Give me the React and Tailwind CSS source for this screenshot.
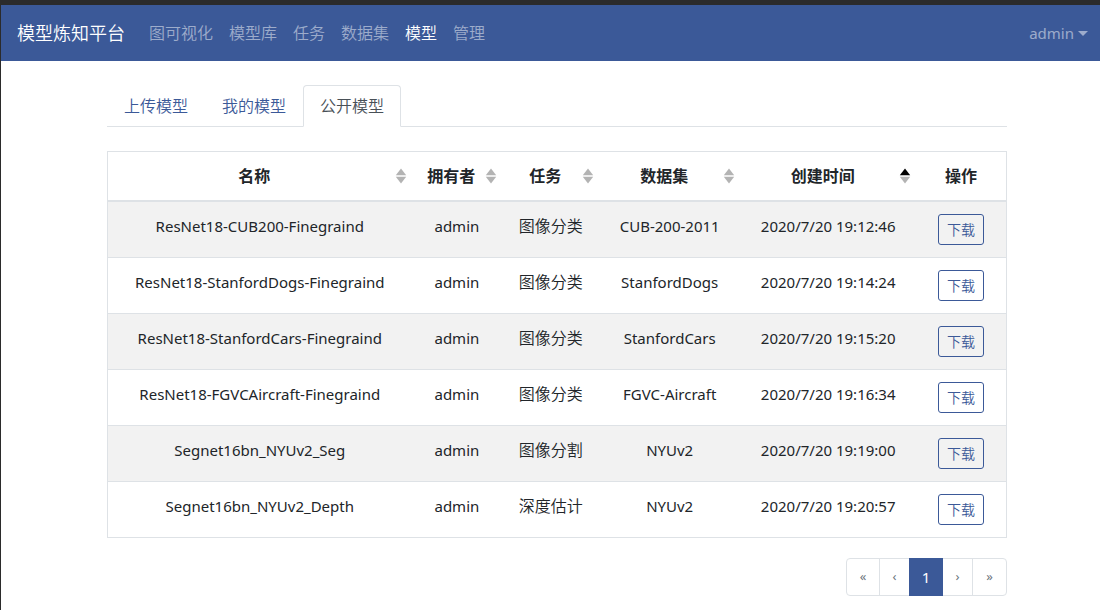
import React from "react";

const navItems = ["图可视化", "模型库", "任务", "数据集", "模型", "管理"];
const tabs = ["上传模型", "我的模型", "公开模型"];

const columns = [
  { title: "名称", width: "w-[33.8%]", sort: "none" },
  { title: "拥有者", width: "w-[10.1%]", sort: "none" },
  { title: "任务", width: "w-[10.8%]", sort: "none" },
  { title: "数据集", width: "w-[15.7%]", sort: "none" },
  { title: "创建时间", width: "w-[19.6%]", sort: "ascending" },
  { title: "操作", width: "w-[10%]" },
];

const rows = [
  ["ResNet18-CUB200-Finegraind", "admin", "图像分类", "CUB-200-2011", "2020/7/20 19:12:46"],
  ["ResNet18-StanfordDogs-Finegraind", "admin", "图像分类", "StanfordDogs", "2020/7/20 19:14:24"],
  ["ResNet18-StanfordCars-Finegraind", "admin", "图像分类", "StanfordCars", "2020/7/20 19:15:20"],
  ["ResNet18-FGVCAircraft-Finegraind", "admin", "图像分类", "FGVC-Aircraft", "2020/7/20 19:16:34"],
  ["Segnet16bn_NYUv2_Seg", "admin", "图像分割", "NYUv2", "2020/7/20 19:19:00"],
  ["Segnet16bn_NYUv2_Depth", "admin", "深度估计", "NYUv2", "2020/7/20 19:20:57"],
];

function SortIcon({ active }) {
  return (
    <svg width="12" height="16" viewBox="0 0 12 16" className="shrink-0" aria-hidden="true">
      <path d="M6 0.5 L11.2 7.3 H0.8 Z" fill={active ? "#000" : "#b3b3b3"} />
      <path d="M0.8 8.7 H11.2 L6 15.5 Z" fill="#b3b3b3" />
    </svg>
  );
}

function Navbar() {
  return (
    <nav className="flex h-14 items-center bg-[#3b5998] pr-3 pl-4 text-base text-white/50">
      <a href="#home" className="mr-6 text-lg text-white">模型炼知平台</a>
      <ul className="flex gap-4">
        {navItems.map((item) => (
          <li key={item}>
            <a href="#nav" className={item === "模型" ? "text-white" : ""}>{item}</a>
          </li>
        ))}
      </ul>
      <button type="button" className="ml-auto flex items-center gap-1 text-[15px] font-normal">
        admin
        <svg width="10" height="5" viewBox="0 0 10 5" aria-hidden="true">
          <path d="M0 0 H10 L5 5 Z" fill="currentColor" />
        </svg>
      </button>
    </nav>
  );
}

function Tabs() {
  return (
    <div role="tablist" className="flex border-b border-[#dee2e6]">
      {tabs.map((tab) => {
        const active = tab === "公开模型";
        return (
          <button
            key={tab}
            type="button"
            role="tab"
            aria-selected={active}
            className={
              active
                ? "-mb-px rounded-t border border-[#dee2e6] border-b-white bg-white px-4 py-2 text-[#495057]"
                : "-mb-px border border-transparent px-4 py-2 text-[#3b5998]"
            }
          >
            {tab}
          </button>
        );
      })}
    </div>
  );
}

function ModelTable() {
  return (
    <table className="mt-6 w-full table-fixed border-separate border-spacing-0 border border-b-0 border-[#dee2e6] text-center">
      <thead>
        <tr>
          {columns.map(({ title, width, sort }) => (
            <th
              key={title}
              scope="col"
              aria-sort={sort}
              className={`${width} h-[50px] border-b-2 border-[#dee2e6] p-0 font-bold`}
            >
              {sort ? (
                <button type="button" className="flex w-full items-center pr-[5px]">
                  <span className="flex-1 pl-[6px]">{title}</span>
                  <SortIcon active={sort === "ascending"} />
                </button>
              ) : (
                title
              )}
            </th>
          ))}
        </tr>
      </thead>
      <tbody>
        {rows.map((row) => (
          <tr key={row[0]} className="odd:bg-[#f2f2f2]">
            {row.map((cell, i) => (
              <td
                key={i}
                className={
                  i === 2
                    ? "border-b border-[#dee2e6] py-3 align-top"
                    : "border-b border-[#dee2e6] py-3 align-top text-[15px] leading-6 font-normal"
                }
              >
                {cell}
              </td>
            ))}
            <td className="border-b border-[#dee2e6] py-3">
              <button
                type="button"
                className="mx-auto block h-[31px] rounded-[3px] border border-[#3b5998] px-2 text-sm text-[#3b5998]"
              >
                下载
              </button>
            </td>
          </tr>
        ))}
      </tbody>
    </table>
  );
}

function Pagination() {
  const item = "-ml-px h-[38px] border border-[#dee2e6] text-[13px] font-normal text-[#6c757d]";
  return (
    <nav aria-label="分页" className="mt-5 flex justify-end">
      <button type="button" className={`${item} w-[34px] rounded-l`}>«</button>
      <button type="button" className={`${item} w-[31px]`}>‹</button>
      <button
        type="button"
        aria-current="page"
        className="z-10 -ml-px h-[38px] w-[34px] border border-[#3b5998] bg-[#3b5998] text-[15px] font-normal text-white"
      >
        1
      </button>
      <button type="button" className={`${item} w-[31px]`}>›</button>
      <button type="button" className={`${item} w-[35px] rounded-r`}>»</button>
    </nav>
  );
}

export default function App() {
  return (
    <div className="min-h-screen border-t-[5px] border-l border-t-[#2b2b2b] border-l-[#2b2b2b] bg-white font-['Noto_Sans','Noto_Sans_CJK_SC',sans-serif] text-base font-[350] text-[#212529]">
      <Navbar />
      <main className="pt-6 pr-[93px] pl-[106px]">
        <Tabs />
        <ModelTable />
        <Pagination />
      </main>
    </div>
  );
}
